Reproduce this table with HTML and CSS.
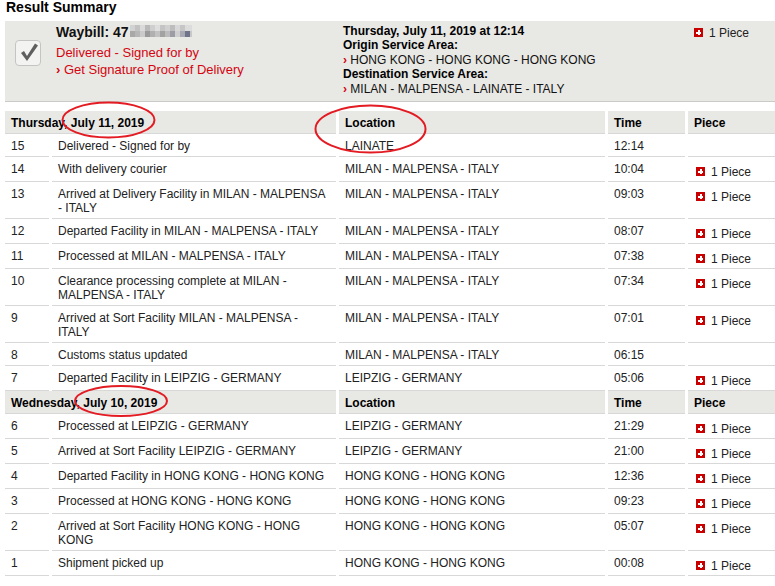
FILE: index.html
```html
<!DOCTYPE html>
<html>
<head>
<meta charset="utf-8">
<title>Result Summary</title>
<link rel="stylesheet" href="styles.css">
</head>
<body>
<h2 class="title">Result Summary</h2>
<div class="summary">
  <div class="col-check">
    <div class="check">
      <svg width="24" height="24" viewBox="0 0 24 24"><polygon points="5,12 8,10 11,15 19,2.5 22,4.5 11,20" fill="#5f5f5f"/></svg>
    </div>
  </div>
  <div class="col-way">
    <div class="waybill">Waybill: 47<span class="blur"></span></div>
    <div class="status">Delivered - Signed for by</div>
    <div class="proof"><span class="chev">›</span> Get Signature Proof of Delivery</div>
  </div>
  <div class="col-info">
    <div class="b">Thursday, July 11, 2019 at 12:14</div>
    <div class="b">Origin Service Area:</div>
    <div><span class="chev">›</span> HONG KONG - HONG KONG - HONG KONG</div>
    <div class="b">Destination Service Area:</div>
    <div><span class="chev">›</span> MILAN - MALPENSA - LAINATE - ITALY</div>
  </div>
  <div class="col-piece"><span class="ic"></span>1 Piece</div>
</div>
<div class="tbl">
<table>
  <colgroup>
    <col class="w-num"><col class="w-desc"><col class="w-loc"><col class="w-time"><col class="w-pc">
  </colgroup>
  <tr class="day"><th colspan="2">Thursday, July 11, 2019</th><th>Location</th><th>Time</th><th>Piece</th></tr>
  <tr><td class="num">15</td><td>Delivered - Signed for by</td><td>LAINATE</td><td>12:14</td><td class="pc"></td></tr>
  <tr><td class="num">14</td><td>With delivery courier</td><td>MILAN - MALPENSA - ITALY</td><td>10:04</td><td class="pc"><span class="ic"></span>1 Piece</td></tr>
  <tr><td class="num">13</td><td>Arrived at Delivery Facility in MILAN - MALPENSA - ITALY</td><td>MILAN - MALPENSA - ITALY</td><td>09:03</td><td class="pc"><span class="ic"></span>1 Piece</td></tr>
  <tr><td class="num">12</td><td>Departed Facility in MILAN - MALPENSA - ITALY</td><td>MILAN - MALPENSA - ITALY</td><td>08:07</td><td class="pc"><span class="ic"></span>1 Piece</td></tr>
  <tr><td class="num">11</td><td>Processed at MILAN - MALPENSA - ITALY</td><td>MILAN - MALPENSA - ITALY</td><td>07:38</td><td class="pc"><span class="ic"></span>1 Piece</td></tr>
  <tr><td class="num">10</td><td>Clearance processing complete at MILAN - MALPENSA - ITALY</td><td>MILAN - MALPENSA - ITALY</td><td>07:34</td><td class="pc"><span class="ic"></span>1 Piece</td></tr>
  <tr><td class="num">9</td><td>Arrived at Sort Facility MILAN - MALPENSA - ITALY</td><td>MILAN - MALPENSA - ITALY</td><td>07:01</td><td class="pc"><span class="ic"></span>1 Piece</td></tr>
  <tr><td class="num">8</td><td>Customs status updated</td><td>MILAN - MALPENSA - ITALY</td><td>06:15</td><td class="pc"></td></tr>
  <tr><td class="num">7</td><td>Departed Facility in LEIPZIG - GERMANY</td><td>LEIPZIG - GERMANY</td><td>05:06</td><td class="pc"><span class="ic"></span>1 Piece</td></tr>
  <tr class="day"><th colspan="2">Wednesday, July 10, 2019</th><th>Location</th><th>Time</th><th>Piece</th></tr>
  <tr><td class="num">6</td><td>Processed at LEIPZIG - GERMANY</td><td>LEIPZIG - GERMANY</td><td>21:29</td><td class="pc"><span class="ic"></span>1 Piece</td></tr>
  <tr><td class="num">5</td><td>Arrived at Sort Facility LEIPZIG - GERMANY</td><td>LEIPZIG - GERMANY</td><td>21:00</td><td class="pc"><span class="ic"></span>1 Piece</td></tr>
  <tr><td class="num">4</td><td>Departed Facility in HONG KONG - HONG KONG</td><td>HONG KONG - HONG KONG</td><td>12:36</td><td class="pc"><span class="ic"></span>1 Piece</td></tr>
  <tr><td class="num">3</td><td>Processed at HONG KONG - HONG KONG</td><td>HONG KONG - HONG KONG</td><td>09:23</td><td class="pc"><span class="ic"></span>1 Piece</td></tr>
  <tr><td class="num">2</td><td>Arrived at Sort Facility HONG KONG - HONG KONG</td><td>HONG KONG - HONG KONG</td><td>05:07</td><td class="pc"><span class="ic"></span>1 Piece</td></tr>
  <tr><td class="num">1</td><td>Shipment picked up</td><td>HONG KONG - HONG KONG</td><td>00:08</td><td class="pc"><span class="ic"></span>1 Piece</td></tr>
</table>
</div>
<svg class="marks" width="775" height="586" viewBox="0 0 775 586">
  <ellipse cx="108.5" cy="120" rx="46" ry="17.5" fill="none" stroke="#e31b23" stroke-width="2"/>
  <ellipse cx="370.5" cy="129" rx="55" ry="23.5" fill="none" stroke="#e31b23" stroke-width="2"/>
  <ellipse cx="121" cy="401" rx="46" ry="15" fill="none" stroke="#e31b23" stroke-width="2"/>
</svg>
</body>
</html>
```
FILE: styles.css
```css
* { box-sizing: border-box; }
html, body { margin: 0; padding: 0; overflow: hidden; }
body {
  font-family: "Liberation Sans", Arial, sans-serif;
  font-size: 12px;
  color: #222;
  background: #fff;
  position: relative;
  width: 775px;
  height: 586px;
}
.title {
  font-size: 14px;
  font-weight: bold;
  line-height: 14px;
  margin: 0 0 0 6px;
  color: #000;
}
.summary {
  margin: 7px 0 0 5px;
  height: 81px;
  background: #e8e8e4;
  border-bottom: 1px solid #cacac6;
  display: grid;
  grid-template-columns: 51px 287px 351px 1fr;
}
.check {
  margin: 19px 0 0 10px;
  width: 26px;
  height: 26px;
  border: 1px solid #c4c4c2;
  border-radius: 4px;
  background: #f3f3f1;
}
.check svg { display: block; }
.col-way { padding-top: 3px; }
.waybill {
  font-size: 14px;
  font-weight: bold;
  line-height: 16px;
  color: #111;
}
.blur {
  display: inline-block;
  width: 62px;
  height: 12px;
  margin-left: 1px;
  background:
    linear-gradient(90deg, #d2d2d2 0 5px, #c2c2c2 5px 10px, #dadada 10px 15px, #b9b9b9 15px 20px, #cfcfcf 20px 25px, #dedede 25px 30px, #c4c4c4 30px 35px, #d0d0d0 35px 40px, #bdbdbd 40px 45px, #d8d8d8 45px 50px, #c6c6c6 50px 55px, #dcdcdc 55px 62px) top left / 100% 6px no-repeat,
    linear-gradient(90deg, #a8a8a8 0 5px, #b6b6b6 5px 10px, #cacaca 10px 15px, #9a9a9a 15px 20px, #b0b0b0 20px 25px, #c2c2c2 25px 30px, #a2a2a2 30px 35px, #bcbcbc 35px 40px, #9c9ca6 40px 45px, #cfcfcf 45px 50px, #a9a9b4 50px 55px, #70748a 55px 60px, #c8c8c8 60px 62px) bottom left / 100% 6px no-repeat;
}
.status {
  color: #d40511;
  font-size: 13px;
  line-height: 17px;
  margin-top: 4px;
}
.proof {
  color: #d40511;
  font-size: 13px;
  line-height: 17px;
}
.chev { color: #d40511; font-weight: bold; }
.col-info { padding-top: 3px; line-height: 14.4px; color: #111; }
.col-info .b { font-weight: bold; color: #000; }
.col-piece { padding-top: 5px; line-height: 14px; color: #222; }
.ic {
  display: inline-block;
  width: 9px;
  height: 9px;
  margin-right: 6px;
  background:
    linear-gradient(#fff, #fff) center / 5px 2px no-repeat,
    linear-gradient(#fff, #fff) center / 2px 5px no-repeat,
    #c80000;
}
.tbl {
  margin: 9px 0 0 2px;
  width: 773px;
  overflow: hidden;
}
table {
  border-collapse: separate;
  border-spacing: 3px 0;
  table-layout: fixed;
  width: 776px;
}
col.w-num { width: 44px; }
col.w-desc { width: 284px; }
col.w-loc { width: 266px; }
col.w-time { width: 77px; }
col.w-pc { width: 87px; }
th, td {
  padding: 5px 6px 3px;
  line-height: 14px;
  vertical-align: top;
  text-align: left;
  border-bottom: 1px solid #d8d8d8;
}
th {
  background: #e8e8e4;
  font-weight: bold;
  color: #000;
  padding-top: 5px;
  padding-bottom: 3px;
}
td.pc { padding-top: 8px; padding-bottom: 2px; }
td.pc .ic { margin-left: 2px; }
.marks {
  position: absolute;
  left: 0;
  top: 0;
  pointer-events: none;
}
```
